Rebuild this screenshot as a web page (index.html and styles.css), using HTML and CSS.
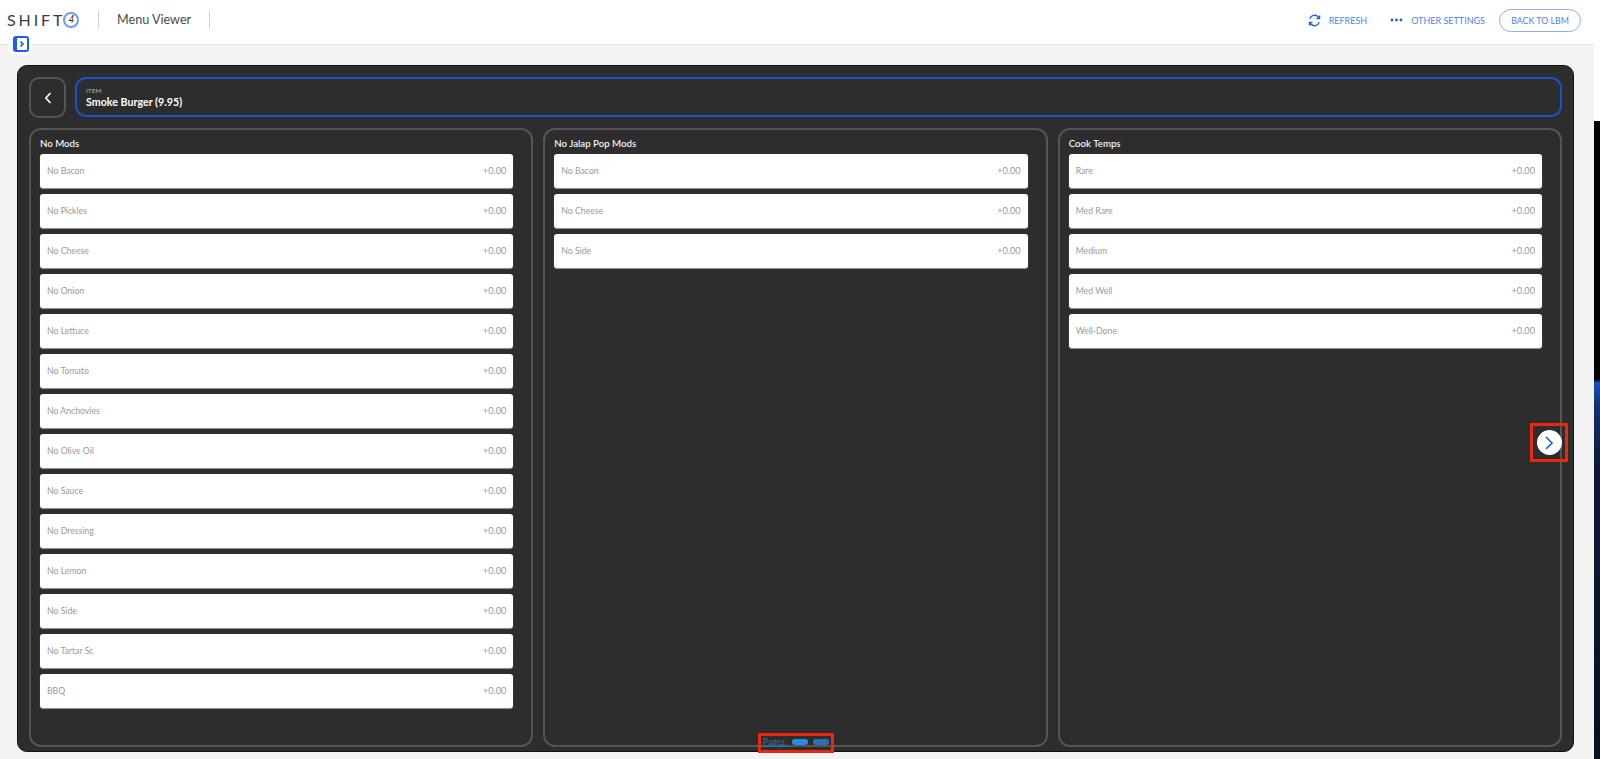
FILE: index.html
```html
<!DOCTYPE html>
<html lang="en">
<head>
<meta charset="utf-8">
<title>Menu Viewer</title>
<link rel="stylesheet" href="styles.css">
</head>
<body>
<div class="app">
  <header class="topbar">
    <div class="logo"><span class="logo-word">SHIFT</span><span class="logo-four">4</span></div>
    <div class="divider"></div>
    <div class="page-title">Menu Viewer</div>
    <div class="divider"></div>
    <nav class="actions">
      <a class="action refresh">
        <svg class="icon" width="13" height="13" viewBox="0 0 14 14" fill="none" stroke="#1f5fe0" stroke-width="1.5"><path d="M2 5.2A5.2 5.2 0 0 1 11 3.2L12 4.6"/><path d="M12.4 1.6v3.2H9.2"/><path d="M12 8.8A5.2 5.2 0 0 1 3 10.8L2 9.4"/><path d="M1.6 12.4V9.2h3.2"/></svg>
        REFRESH
      </a>
      <a class="action settings">
        <svg class="icon" width="13" height="4" viewBox="0 0 13 4" fill="#1f5fe0"><circle cx="2" cy="2" r="1.4"/><circle cx="6.5" cy="2" r="1.4"/><circle cx="11" cy="2" r="1.4"/></svg>
        OTHER SETTINGS
      </a>
      <a class="back-lbm">BACK TO LBM</a>
    </nav>
  </header>

  <button class="drawer-toggle" aria-label="Open drawer">
    <svg width="16" height="16" viewBox="0 0 16 16"><rect width="16" height="16" rx="3" fill="#1c5cf0"/><rect x="4" y="2" width="10" height="12" rx="1" fill="#fff"/><path d="M7.5 5.6L10 8L7.5 10.4" fill="none" stroke="#1c5cf0" stroke-width="1.6"/></svg>
  </button>

  <main class="content">
    <section class="panel">
      <div class="panel-head">
        <button class="back" aria-label="Back">
          <svg width="10" height="12" viewBox="0 0 10 12" fill="none" stroke="#fff" stroke-width="1.7" stroke-linecap="round" stroke-linejoin="round"><path d="M7 1.5L2.8 6L7 10.5"/></svg>
        </button>
        <div class="item-box">
          <div class="item-label">ITEM</div>
          <div class="item-name">Smoke Burger (9.95)</div>
        </div>
      </div>
      <div class="columns">
        <div class="col">
          <div class="col-title">No Mods</div>
          <div class="mod"><span>No Bacon</span><span>+0.00</span></div>
          <div class="mod"><span>No Pickles</span><span>+0.00</span></div>
          <div class="mod"><span>No Cheese</span><span>+0.00</span></div>
          <div class="mod"><span>No Onion</span><span>+0.00</span></div>
          <div class="mod"><span>No Lettuce</span><span>+0.00</span></div>
          <div class="mod"><span>No Tomato</span><span>+0.00</span></div>
          <div class="mod"><span>No Anchovies</span><span>+0.00</span></div>
          <div class="mod"><span>No Olive Oil</span><span>+0.00</span></div>
          <div class="mod"><span>No Sauce</span><span>+0.00</span></div>
          <div class="mod"><span>No Dressing</span><span>+0.00</span></div>
          <div class="mod"><span>No Lemon</span><span>+0.00</span></div>
          <div class="mod"><span>No Side</span><span>+0.00</span></div>
          <div class="mod"><span>No Tartar Sc</span><span>+0.00</span></div>
          <div class="mod"><span>BBQ</span><span>+0.00</span></div>
        </div>
        <div class="col">
          <div class="col-title">No Jalap Pop Mods</div>
          <div class="mod"><span>No Bacon</span><span>+0.00</span></div>
          <div class="mod"><span>No Cheese</span><span>+0.00</span></div>
          <div class="mod"><span>No Side</span><span>+0.00</span></div>
        </div>
        <div class="col">
          <div class="col-title">Cook Temps</div>
          <div class="mod"><span>Rare</span><span>+0.00</span></div>
          <div class="mod"><span>Med Rare</span><span>+0.00</span></div>
          <div class="mod"><span>Medium</span><span>+0.00</span></div>
          <div class="mod"><span>Med Well</span><span>+0.00</span></div>
          <div class="mod"><span>Well-Done</span><span>+0.00</span></div>
        </div>
      </div>

      <div class="pager-mark">
        <a class="pager-label">Pages:</a>
        <span class="pill pill-on"></span>
        <span class="pill"></span>
      </div>
      <div class="next-mark">
        <button class="next" aria-label="Next page">
          <svg width="12" height="16" viewBox="0 0 12 16" fill="none" stroke="#1c5cf0" stroke-width="1.6"><path d="M3 2L9 8L3 14"/></svg>
        </button>
      </div>
    </section>
  </main>
</div>
<aside class="backdrop-strip"><div class="strip-fill"></div></aside>
</body>
</html>
```

FILE: styles.css
```css
* { box-sizing: border-box; }
html, body { margin: 0; padding: 0; height: 759px; overflow: hidden; }
body {
  display: flex;
  background: #fff;
  font-family: "Lato", "Open Sans", sans-serif;
}
.app {
  position: relative;
  width: 1594px;
  height: 759px;
  display: flex;
  flex-direction: column;
  background: #f3f3f3;
}
.topbar {
  height: 45px;
  flex: none;
  display: flex;
  align-items: flex-start;
  padding-left: 7px;
  background: #fff;
  border-bottom: 1px solid #e6e6e6;
}
.logo { display: flex; align-items: center; height: 40px; width: 91px; color: #3d3d3d; }
.logo-word { font-family: "Lato", sans-serif; font-size: 16px; font-weight: 400; letter-spacing: 2.9px; line-height: 1; }
.logo-four {
  width: 16px; height: 16px; margin-left: -2px;
  display: flex; align-items: center; justify-content: center;
  border: 2px solid #6c9cf6;
  border-radius: 50%;
  font-family: "Liberation Sans", sans-serif;
  font-size: 10px; font-style: italic; line-height: 1;
}
.divider { width: 1px; height: 19px; margin-top: 10px; background: #d4d4d4; }
.page-title { width: 110px; padding-left: 18px; font-size: 12.6px; line-height: 40px; color: #4a4a4a; }
.actions { margin-left: auto; display: flex; align-items: center; height: 40px; }
.action { display: flex; align-items: center; font-size: 9px; color: #4f7fee; white-space: nowrap; }
.action .icon { margin-right: 8px; }
.refresh { margin-right: 23px; }
.settings { margin-right: 14px; }
.back-lbm {
  width: 82px; height: 23px; margin-right: 13px;
  display: flex; align-items: center; justify-content: center;
  border: 1px solid #8fadf3; border-radius: 12px;
  font-size: 8.8px; color: #4f7fee; white-space: nowrap;
}
.drawer-toggle {
  position: absolute; left: 9px; top: 33px;
  width: 23px; height: 21px; padding: 0;
  display: flex; align-items: center; justify-content: center;
  border: 0; border-radius: 3px; background: #fff;
}
.content { flex: 1; padding: 20px 20px 7px 17px; min-height: 0; }
.panel {
  position: relative;
  height: 100%;
  display: flex;
  flex-direction: column;
  gap: 10px;
  padding: 11px 11px 4px 11px;
  background: #2d2d2d;
  border: 1px solid #111;
  border-radius: 10px;
}
.panel-head { display: flex; gap: 9px; height: 41px; flex: none; }
.back {
  width: 37px; height: 41px; flex: none; padding: 0;
  display: flex; align-items: center; justify-content: center;
  background: transparent; border: 2px solid #555; border-radius: 10px;
}
.item-box {
  flex: 1; height: 40px; padding: 8px 10px 0 9px;
  border: 2px solid #1b51c9; border-radius: 11px; color: #fff;
}
.item-label { font-size: 6.5px; line-height: 8px; color: #b5b5b5; }
.item-name { font-size: 10.7px; line-height: 13px; font-weight: 700; }
.columns { flex: 1; min-height: 0; display: grid; grid-template-columns: repeat(3, 1fr); gap: 10px; }
.col {
  padding: 6px 18px 0 9px;
  display: flex; flex-direction: column; gap: 6px;
  border: 2px solid #555; border-radius: 12px;
}
.col-title { font-size: 9.7px; line-height: 15px; font-weight: 500; color: #fff; height: 14px; margin-bottom: -2px; }
.mod {
  height: 34px; flex: none;
  display: flex; align-items: center; justify-content: space-between;
  padding: 0 7px 1px 7px;
  background: #fff; border-radius: 3px;
  box-shadow: 0 1px 1px #999;
  font-size: 8.7px; color: #999;
}
.mod span:last-child { font-size: 9.2px; }
.pager-mark {
  position: absolute; left: 740px; top: 667px;
  width: 76px; height: 20px;
  display: flex; align-items: center; gap: 5px;
  padding: 0 0 3px 2px;
  border: 3px solid #e8280f;
  font-size: 8.5px; color: #2c72b8;
}
.pager-label { text-decoration: underline; width: 24px; flex: none; }
.pill { width: 16px; height: 6px; flex: none; border-radius: 3px; background: #2f6fae; }
.pill-on { background: #2b8be8; }
.next-mark {
  position: absolute; left: 1512px; top: 357px;
  width: 38px; height: 39px;
  display: flex; align-items: center; justify-content: center;
  border: 3px solid #e8280f;
}
.next {
  width: 25px; height: 25px; padding: 0;
  display: flex; align-items: center; justify-content: center;
  background: #fff; border: 0; border-radius: 50%;
}
.backdrop-strip { width: 6px; height: 759px; padding-top: 121px; background: #fff; }
.strip-fill {
  height: 638px;
  background: linear-gradient(#000 0, #000 258px, #1c4fc0 262px, #12306f 285px, #0c1a3a 340px, #0a1020 100%);
}
```
